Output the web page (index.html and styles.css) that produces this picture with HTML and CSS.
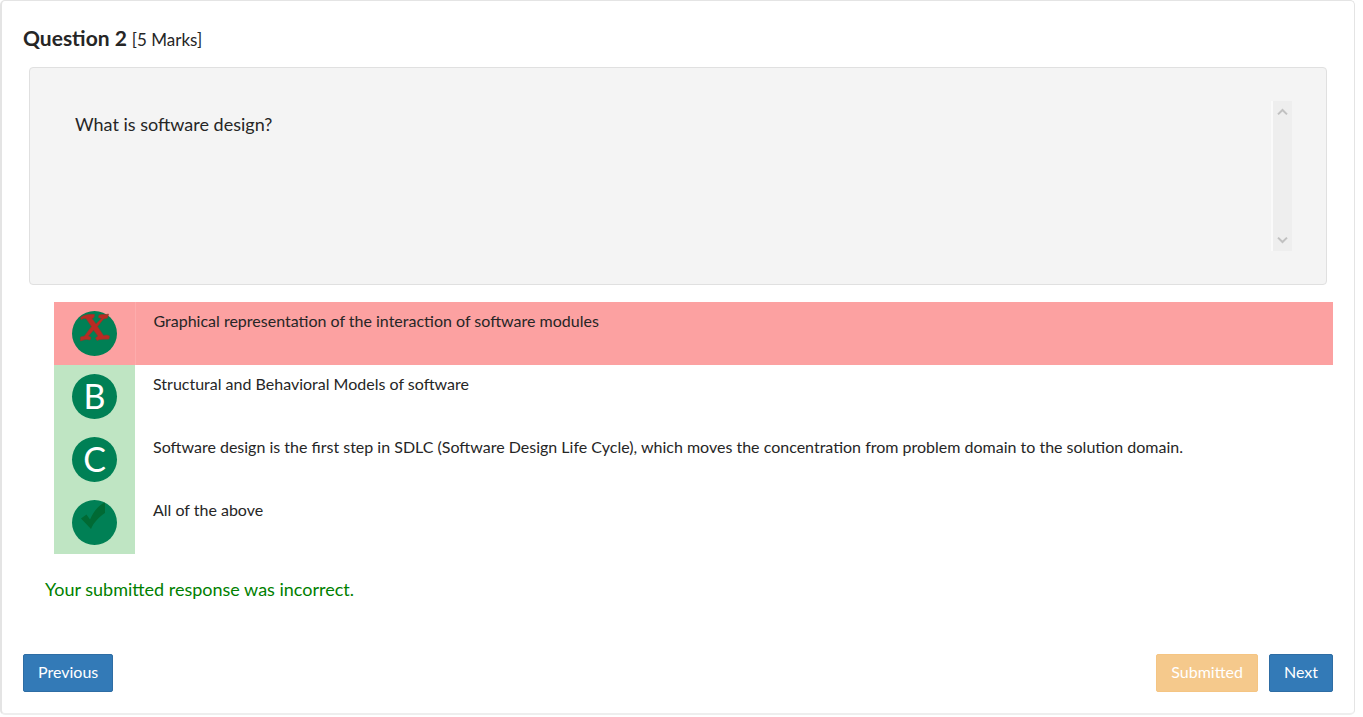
FILE: index.html
```html
<!DOCTYPE html>
<html lang="en">
<head>
<meta charset="utf-8">
<meta name="viewport" content="width=device-width, initial-scale=1">
<title>Question 2</title>
<link rel="stylesheet" href="styles.css">
</head>
<body>
<main class="card">
  <header class="heading">
    <h1 class="title">Question 2</h1>
    <span class="marks">[5 Marks]</span>
  </header>
  <section class="question">
    <p class="question-text">What is software design?</p>
    <div class="scroll-track">
      <svg width="12" height="8" viewBox="0 0 12 8" aria-hidden="true"><path d="M1 6.400 5.500 2l4.500 4.400"/></svg>
      <svg width="12" height="8" viewBox="0 0 12 8" aria-hidden="true"><path d="M1 1.600 5.500 6l4.500-4.400"/></svg>
    </div>
  </section>
  <table class="options">
    <tbody>
      <tr class="option wrong">
        <th scope="row" class="option-key">
          <svg class="mark" width="45" height="45" viewBox="0 0 45 45" role="img" aria-label="Incorrect">
            <circle cx="22.500" cy="22.500" r="22.500" fill="#008055"/>
            <path d="M8.500 6.500C12 3.500 18 3 22.500 3.500L22 6.500 20 7.500 24 13 29.500 7.500 26.500 6.500 27 4C31 3 34 4 36.500 3L35.500 7 31.500 8 25.500 15.500 31.500 24.500 35 24 37.500 25 37 28C33 28.500 29 27.500 25 29.500L23.500 27 26 25 21.500 19 16.500 25 19 26.500 18 29C14.500 28 12 28.500 8.500 30L8.500 26 12.500 25 19.500 15.500 14 7.500 11 7.500 9.500 9Z" fill="#b92b24" stroke="#8c3a28" stroke-width=".6"/>
          </svg>
        </th>
        <td class="option-text">Graphical representation of the interaction of software modules</td>
      </tr>
      <tr class="option">
        <th scope="row" class="option-key"><span class="letter">B</span></th>
        <td class="option-text">Structural and Behavioral Models of software</td>
      </tr>
      <tr class="option">
        <th scope="row" class="option-key"><span class="letter">C</span></th>
        <td class="option-text">Software design is the first step in SDLC (Software Design Life Cycle), which moves the concentration from problem domain to the solution domain.</td>
      </tr>
      <tr class="option">
        <th scope="row" class="option-key">
          <svg class="mark" width="45" height="45" viewBox="0 0 45 45" role="img" aria-label="Correct">
            <circle cx="22.500" cy="22.500" r="22.500" fill="#008055"/>
            <path d="M9 18.500 14.500 14.500 18 19.500C22 11 26 6 32.500 2.500L33 3 33 13C27 17 22 22 19 29Z" fill="#006a34"/>
          </svg>
        </th>
        <td class="option-text">All of the above</td>
      </tr>
    </tbody>
  </table>
  <p class="feedback">Your submitted response was incorrect.</p>
  <footer class="actions">
    <button type="button" class="button">Previous</button>
    <div class="actions-end">
      <button type="button" class="button submitted" disabled>Submitted</button>
      <button type="button" class="button">Next</button>
    </div>
  </footer>
</main>
</body>
</html>
```
FILE: styles.css
```css
* { box-sizing: border-box; }

body {
  margin: 0 8px 0 0;
  background: #fff;
  color: #262626;
  font-family: Lato, "Open Sans", sans-serif;
  font-size: 16px;
  line-height: 24px;
}

.card {
  padding: 22px 21px 21px;
  border: 1px solid #e4e4e4;
  border-bottom: 2px solid #eee;
  border-left-width: 2px;
  border-radius: 5px;
}

.heading {
  display: flex;
  align-items: baseline;
  gap: 5px;
  line-height: 30px;
}

.title {
  margin: 0;
  font-size: 21px;
  font-weight: 700;
}

.marks { font-size: 17px; }

.question {
  display: flex;
  justify-content: space-between;
  margin: 12px 6px 0;
  padding: 33px 34px 33px 45px;
  border: 1px solid #e0e0e0;
  border-radius: 4px;
  background: #f4f4f4;
}

.question-text {
  margin: 11px 0 0;
  font-size: 18px;
}

.scroll-track {
  display: flex;
  flex-direction: column;
  align-items: center;
  justify-content: space-between;
  width: 21px;
  height: 150px;
  padding: 7px 0;
  border-left: 2px solid #fafafa;
  background: #eee;
}

.scroll-track path {
  fill: none;
  stroke: #c1c1c1;
  stroke-width: 2;
}

.options {
  width: calc(100% - 31px);
  margin: 17px 0 0 31px;
  border-collapse: collapse;
}

.option-key {
  width: 81px;
  height: 63px;
  padding: 0;
  background: #bfe5c3;
  font-weight: 400;
}

.wrong .option-key,
.wrong .option-text { background: #fca1a1; }

.wrong .option-key { border-right: 1px solid #fdacac; }

.option-text {
  padding: 7px 18px;
  vertical-align: top;
}

.mark,
.letter {
  display: block;
  width: 45px;
  height: 45px;
  margin: 0 auto;
}

.letter {
  border-radius: 50%;
  background: #008055;
  color: #fff;
  font-size: 34px;
  line-height: 43px;
  text-align: center;
}

.feedback {
  margin: 23px 22px 0;
  color: #008000;
  font-size: 18px;
}

.actions,
.actions-end {
  display: flex;
  justify-content: space-between;
}

.actions { margin-top: 53px; }

.actions-end { gap: 11px; }

.button {
  height: 38px;
  padding: 0 14px 2px;
  border: 1px solid #2e6da4;
  border-radius: 2px;
  background: #337ab7;
  color: #fff;
  font: inherit;
}

.submitted {
  border-color: #f5c583;
  background: #f5c98c;
}
```
